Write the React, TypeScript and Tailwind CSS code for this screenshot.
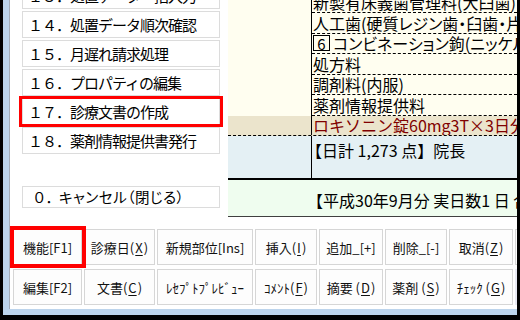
import React from "react";

const menuItems = [
  "１３．処置データ一括入力",
  "１４．処置データ順次確認",
  "１５．月遅れ請求処理",
  "１６．プロパティの編集",
  "１７．診療文書の作成",
  "１８．薬剤情報提供書発行",
];

function U({ children }: { children: React.ReactNode }) {
  return <span className="underline underline-offset-[2px] px-[1px]">{children}</span>;
}

type Btn = { w: string; label: React.ReactNode; red?: boolean; empty?: boolean };

const row1: Btn[] = [
  { w: "w-[69px]", label: "機能[F1]", red: true },
  { w: "w-[71px]", label: <>診療日(<U>X</U>)</> },
  { w: "w-[96px]", label: "新規部位[Ins]" },
  { w: "w-[62px]", label: <>挿入(<U>I</U>)</> },
  { w: "w-[64px]", label: "追加_[+]" },
  { w: "w-[62px]", label: "削除_[-]" },
  { w: "w-[64px]", label: <>取消(<U>Z</U>)</> },
  { w: "w-[40px]", label: "", empty: true },
];

const row2: Btn[] = [
  { w: "w-[69px]", label: "編集[F2]" },
  { w: "w-[71px]", label: <>文書(<U>C</U>)</> },
  { w: "w-[96px]", label: "ﾚｾﾌﾟﾄﾌﾟﾚﾋﾞｭｰ" },
  { w: "w-[62px]", label: <>ｺﾒﾝﾄ(<U>F</U>)</> },
  { w: "w-[64px]", label: <>摘要 (<U>D</U>)</> },
  { w: "w-[62px]", label: <>薬剤 (<U>S</U>)</> },
  { w: "w-[64px]", label: <>ﾁｪｯｸ (<U>G</U>)</> },
];

function Button({ b }: { b: Btn }) {
  return (
    <div
      className={`relative shrink-0 h-full ${b.w} border border-[#d6d6d6] bg-[#fdfdfd] flex items-center justify-center text-[13px] leading-none whitespace-nowrap text-[#111]`}
    >
      {b.label}
      {b.red && (
        <div className="absolute z-10 -left-[4px] -right-[5px] -top-[4px] -bottom-[4px] border-[4px] border-[#ff0000]" />
      )}
    </div>
  );
}

const rows: React.ReactNode[] = [
  "新製有床義歯管理料(大臼歯)",
  <span className="[font-feature-settings:'palt']">人工歯(硬質レジン歯・臼歯・片側)</span>,
  <span className="flex items-center [font-feature-settings:'palt']">
    <span className="inline-flex w-[17px] h-[16px] border border-black items-center justify-center text-[15px] leading-none mr-[3px]">
      6
    </span>
    コンビネーション鉤(ニッケル)(大臼歯)
  </span>,
  "処方料",
  "調剤料(内服)",
  "薬剤情報提供料",
];

export default function App() {
  return (
    <div className="w-[520px] h-[320px] overflow-hidden bg-black pl-[3px] pr-[3px] pb-[5px] font-['Noto_Sans_CJK_JP','Noto_Sans_CJK_SC',sans-serif] text-black">
      <div className="h-full bg-[#bcd4ec] pl-[6px] pb-[6px]">
        <div className="h-full flex flex-col border-l border-[#a3acb8] bg-white overflow-hidden">
          <div className="flex h-[217px] shrink-0">
            {/* Left menu */}
            <div className="w-[218px] shrink-0 bg-white pl-[12px] overflow-hidden">
              <div className="w-[198px] -mt-[18px] flex flex-col gap-[2px]">
                {menuItems.map((t, i) => (
                  <div
                    key={i}
                    className="relative h-[27px] shrink-0 border border-[#dcdcdc] bg-white flex items-center pl-[5px] text-[15px] tracking-[-1px] leading-none whitespace-nowrap"
                  >
                    {t}
                    {i === 4 && (
                      <div className="absolute -left-[4px] -right-[4px] -top-[3px] -bottom-[3px] border-[3px] border-[#ff0000]" />
                    )}
                  </div>
                ))}
              </div>
              <div className="mt-[32px] w-[198px] h-[22px] border border-[#dcdcdc] bg-white flex items-center pl-[9px] text-[14.5px] leading-none whitespace-nowrap">
                <span className="tracking-[-1px]">０．</span>
                <span className="[font-feature-settings:'palt'] tracking-[0.5px]">キャンセル（閉じる）</span>
              </div>
            </div>

            {/* Right detail */}
            <div className="w-[289px] shrink-0 bg-[#fffef0] overflow-hidden text-[16px] leading-[20px]">
              <div className="-mt-[7.5px]">
                {rows.map((r, i) => (
                  <div key={i} className="flex h-[20.5px]">
                    <div className="w-[83px] shrink-0" />
                    <div className="flex-1 min-w-0 border-l border-black">
                      <div className="h-full border-b border-dashed border-black flex items-center pl-[1px] whitespace-nowrap overflow-hidden">
                        {r}
                      </div>
                    </div>
                  </div>
                ))}
                <div className="flex h-[20.5px] bg-[#ebe4cc] border-b border-dashed border-black">
                  <div className="w-[83px] shrink-0" />
                  <div className="flex-1 min-w-0 border-l border-black flex items-center pl-[1px] whitespace-nowrap overflow-hidden text-[#800000]">
                    ロキソニン錠60mg3T×3日分
                  </div>
                </div>
                <div className="flex h-[44px] bg-[#e4f0f4] border-b-2 border-black">
                  <div className="w-[83px] shrink-0" />
                  <div className="flex-1 min-w-0 border-l border-black pt-[4px] whitespace-nowrap overflow-hidden">
                    <span className="block -ml-[6px]">【日計 1,273 点】院長</span>
                  </div>
                </div>
                <div className="flex h-[37px] bg-[#effdef] border-b border-[#404040] items-center pt-[3px] pl-[79px] whitespace-nowrap overflow-hidden">
                  【平成30年9月分 実日数1 日 合計点数 2,546 点】
                </div>
              </div>
            </div>
          </div>

          {/* Buttons */}
          <div className="flex-1 bg-white pl-[3px] pt-[12px] flex flex-col gap-[4px] overflow-hidden">
            <div className="flex gap-[2px] h-[36px] shrink-0">
              {row1.map((b, i) => (
                <Button key={i} b={b} />
              ))}
            </div>
            <div className="flex gap-[2px] h-[36px] shrink-0">
              {row2.map((b, i) => (
                <Button key={i} b={b} />
              ))}
              <div className="w-[40px] shrink-0 h-full bg-[#e9eaf4]" />
            </div>
          </div>
        </div>
      </div>
    </div>
  );
}
